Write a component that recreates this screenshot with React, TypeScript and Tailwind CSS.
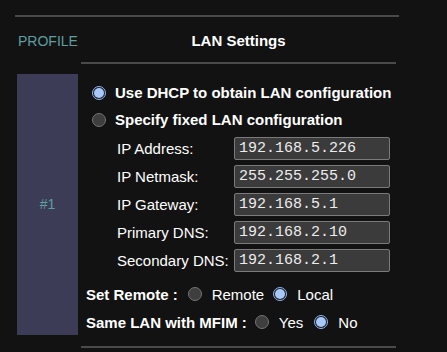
const FIELDS = [
  { label: 'IP Address:', value: '192.168.5.226' },
  { label: 'IP Netmask:', value: '255.255.255.0' },
  { label: 'IP Gateway:', value: '192.168.5.1' },
  { label: 'Primary DNS:', value: '192.168.2.10' },
  { label: 'Secondary DNS:', value: '192.168.2.1' },
];

function Radio({ on }: { on?: boolean }) {
  if (on) {
    return (
      <span className="w-[14px] h-[14px] rounded-full border border-[#8fb6f2] bg-[#1c1c1c] flex items-center justify-center flex-shrink-0">
        <span className="block w-[10px] h-[10px] rounded-full bg-[#a8c8fa]" />
      </span>
    );
  }
  return <span className="block w-[14px] h-[14px] rounded-full border border-[#747474] bg-[#3e3e3e] flex-shrink-0" />;
}

export default function App() {
  return (
    <div className="bg-[#121212] w-[447px] h-[352px] pt-[15px] pl-[15px] text-white font-['Liberation_Sans',Arial,sans-serif] overflow-hidden">
      <div className="w-[384px] h-[2px] bg-[#4a4a4a]" />
      <div className="flex">
        {/* Profile column */}
        <div className="w-[66px]">
          <div className="h-[45px] pt-[16px] pl-[3px] text-[14px] leading-[16px] text-[#5f9ea0]">PROFILE</div>
          <div className="mt-[12px] ml-[2px] w-[61px] h-[261px] bg-[#3c3c57] flex items-center justify-center text-[14px] text-[#5f9ea0]">
            #1
          </div>
        </div>

        {/* Settings column */}
        <div className="w-[315px]">
          <div className="h-[45px] pt-[15px] text-center text-[15px] leading-[17px] font-bold">LAN Settings</div>
          <div className="h-[2px] bg-[#4a4a4a]" />

          <div className="text-[15px] leading-[17px]">
            <div className="mt-[20px] flex items-center h-[17px] pl-[11px] gap-[9px] font-bold">
              <Radio on />
              <span>Use DHCP to obtain LAN configuration</span>
            </div>
            <div className="mt-[10px] flex items-center h-[17px] pl-[11px] gap-[9px] font-bold">
              <Radio />
              <span>Specify fixed LAN configuration</span>
            </div>

            <div className="mt-[9px] pl-[36px] flex flex-col gap-[5px]">
              {FIELDS.map(f => (
                <div key={f.label} className="flex items-center h-[23px]">
                  <span className="w-[117px]">{f.label}</span>
                  <div className="w-[156px] h-[23px] bg-[#3b3b3b] border border-[#7a7a7a] rounded-[2px] pl-[4px] flex items-center font-['Liberation_Mono','Courier_New',monospace] text-[15px] text-[#ededed]">
                    {f.value}
                  </div>
                </div>
              ))}
            </div>

            <div className="mt-[9px] pl-[5px] flex items-center h-[26px]">
              <span className="font-bold">Set Remote :</span>
              <span className="ml-[10px]"><Radio /></span>
              <span className="ml-[10px]">Remote</span>
              <span className="ml-[9px]"><Radio on /></span>
              <span className="ml-[10px]">Local</span>
            </div>
            <div className="mt-[2px] pl-[5px] flex items-center h-[26px]">
              <span className="font-bold">Same LAN with MFIM :</span>
              <span className="ml-[8px]"><Radio /></span>
              <span className="ml-[10px]">Yes</span>
              <span className="ml-[11px]"><Radio on /></span>
              <span className="ml-[10px]">No</span>
            </div>
          </div>

          <div className="mt-[11px] h-[2px] bg-[#4a4a4a]" />
        </div>
      </div>
    </div>
  );
}
